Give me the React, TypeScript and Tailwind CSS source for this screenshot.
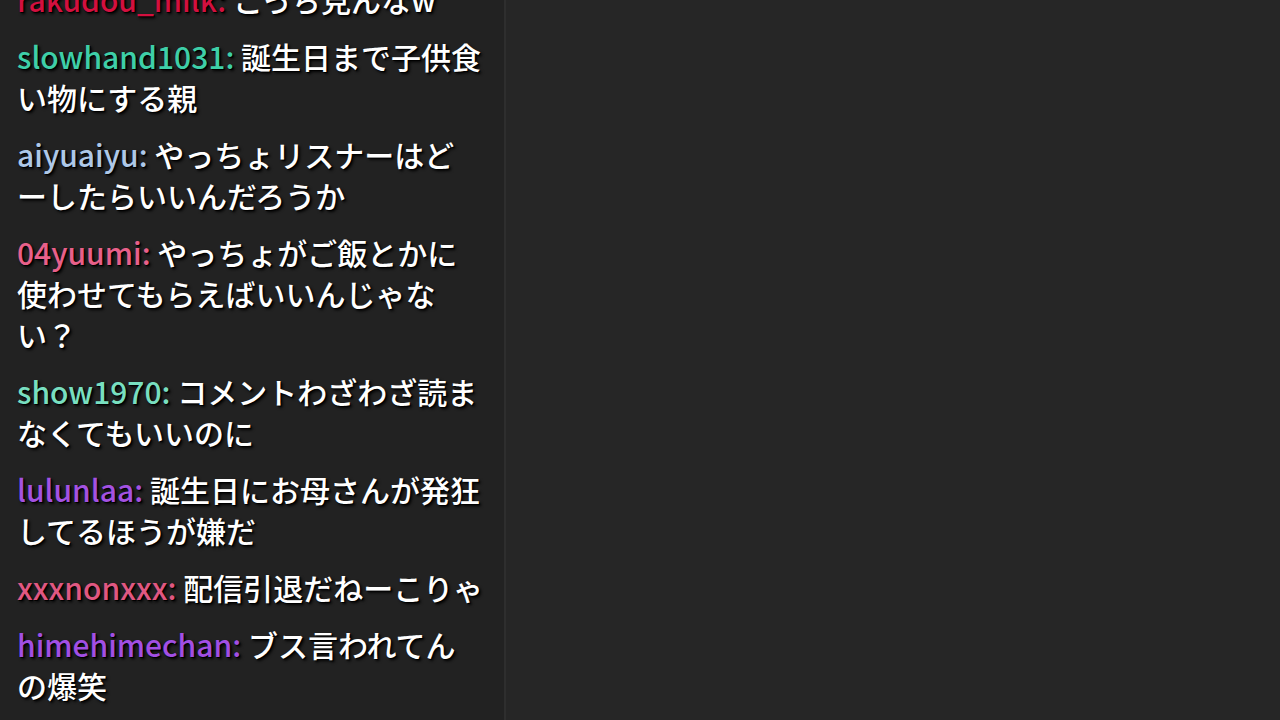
import React from 'react';

type Msg = { user: string; color: string; text: string };

const messages: Msg[] = [
  { user: 'rakudou_milk', color: 'text-[#d3103f]', text: 'こっち見んなw' },
  { user: 'slowhand1031', color: 'text-[#3ecfa8]', text: '誕生日まで子供食い物にする親' },
  { user: 'aiyuaiyu', color: 'text-[#aec8e8]', text: 'やっちょリスナーはどーしたらいいんだろうか' },
  { user: '04yuumi', color: 'text-[#e8608a]', text: 'やっちょがご飯とかに使わせてもらえばいいんじゃない？' },
  { user: 'show1970', color: 'text-[#78dfc0]', text: 'コメントわざわざ読まなくてもいいのに' },
  { user: 'lulunlaa', color: 'text-[#a452e2]', text: '誕生日にお母さんが発狂してるほうが嫌だ' },
  { user: 'xxxnonxxx', color: 'text-[#e05882]', text: '配信引退だねーこりゃ' },
  { user: 'himehimechan', color: 'text-[#a24fe4]', text: 'ブス言われてんの爆笑' },
];

const App: React.FC = () => {
  return (
    <div className="w-[1280px] h-[720px] flex bg-[#262626] overflow-hidden font-['Noto_Sans_CJK_JP','Noto_Sans',sans-serif]">
      {/* chat panel */}
      <div className="w-[506px] h-full shrink-0 bg-[#222222] border-r-2 border-[#2e2e2e] flex flex-col justify-end overflow-hidden pl-[17px] pb-[14px]">
        <div className="w-[467px] flex flex-col gap-[16px]">
          {messages.map((m) => (
            <p
              key={m.user}
              className="text-[30px] leading-[41px] font-medium text-white [text-shadow:1px_1px_0_#000,2px_2px_3px_#000]"
            >
              <span className={m.color}>{m.user}:</span> {m.text}
            </p>
          ))}
        </div>
      </div>
      <div className="flex-1 h-full" />
    </div>
  );
};

export default App;
